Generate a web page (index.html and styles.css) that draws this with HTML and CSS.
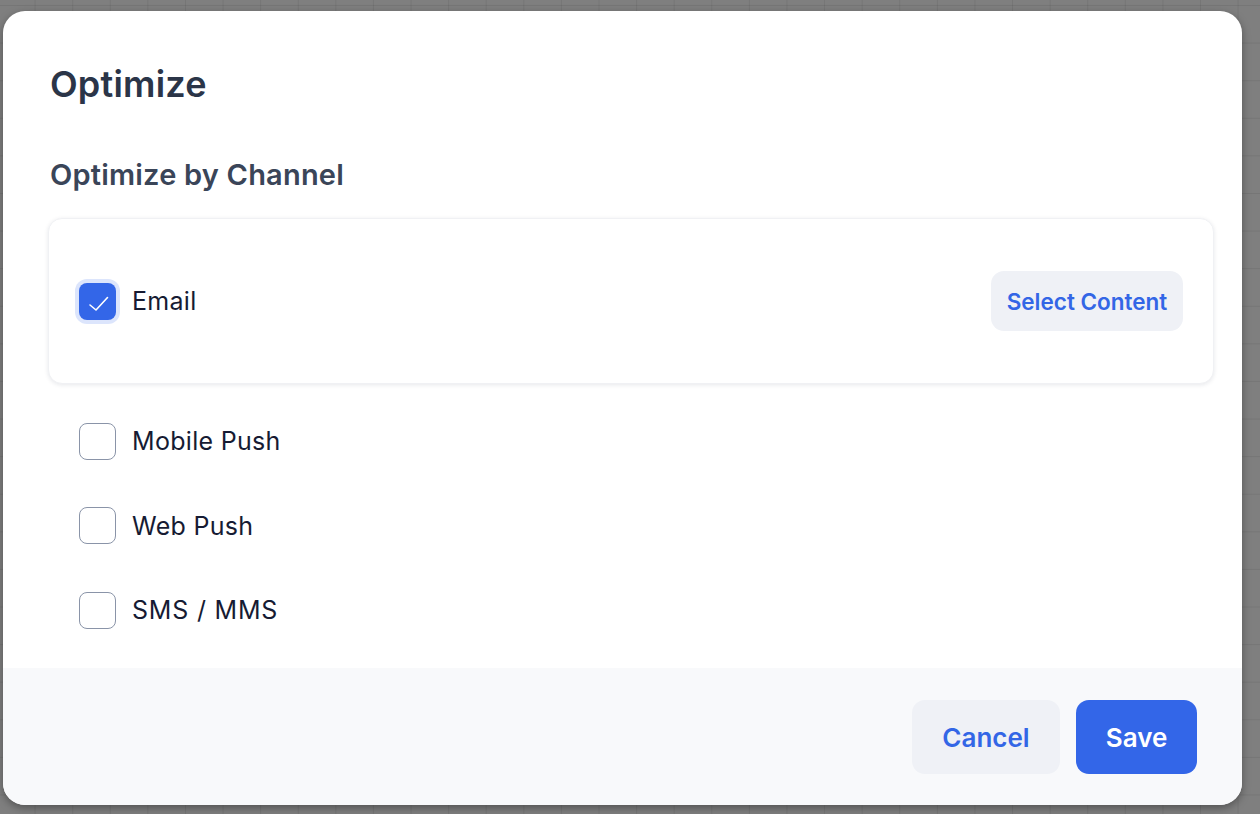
FILE: index.html
```html
<!DOCTYPE html>
<html lang="en">
<head>
<meta charset="utf-8">
<title>Optimize</title>
<link rel="stylesheet" href="styles.css">
</head>
<body>
<div class="modal">
  <div class="content">
    <h1 class="title">Optimize</h1>
    <h2 class="subtitle">Optimize by Channel</h2>
    <div class="card">
      <label class="option">
        <span class="box checked">
          <svg viewBox="0 0 37 37" width="37" height="37"><path d="M11 22 L17 27 L28.5 14.5" fill="none" stroke="#fff" stroke-width="1.6" stroke-linecap="round" stroke-linejoin="round"/></svg>
        </span>
        <span class="label">Email</span>
      </label>
      <button class="btn btn-light select">Select Content</button>
    </div>
    <div class="list">
      <label class="option row"><span class="box"></span><span class="label">Mobile Push</span></label>
      <label class="option row"><span class="box"></span><span class="label">Web Push</span></label>
      <label class="option row"><span class="box"></span><span class="label wide">SMS / MMS</span></label>
    </div>
  </div>
  <div class="footer">
    <button class="btn btn-light cancel">Cancel</button>
    <button class="btn btn-primary save">Save</button>
  </div>
</div>
</body>
</html>
```
FILE: styles.css
```css
html, body {
  margin: 0;
  height: 100%;
}
body {
  background-color: #7f7f7f;
  background-image:
    linear-gradient(to right, rgba(0,0,0,0.07) 1px, transparent 1px),
    linear-gradient(to bottom, rgba(0,0,0,0.07) 1px, transparent 1px);
  background-size: 37.6px 37.6px;
  background-position: -3px 5px;
  padding: 11px 18px 9px 3px;
  box-sizing: border-box;
  font-family: "Inter", "Liberation Sans", sans-serif;
  overflow: hidden;
}
.modal {
  width: 1239px;
  height: 794px;
  background: #fff;
  border-radius: 22px;
  overflow: hidden;
  display: flex;
  flex-direction: column;
  box-shadow: 0 3px 8px rgba(0,0,0,0.35);
}
.content {
  padding: 53px 28px 0 45px;
  flex: 1;
}
.title {
  margin: 0 0 0 2px;
  font-size: 36px;
  line-height: 40px;
  font-weight: 600;
  color: #2b3548;
  letter-spacing: 0.2px;
}
.subtitle {
  margin: 53px 0 0 2px;
  font-size: 29px;
  line-height: 36px;
  font-weight: 600;
  color: #3a4558;
  letter-spacing: 0.2px;
}
.card {
  margin-top: 25px;
  height: 166px;
  box-sizing: border-box;
  padding: 0 30px;
  border-radius: 14px;
  background: #fff;
  border: 1px solid #f0f1f4;
  box-shadow: 0 1px 4px rgba(20,30,60,0.10);
  display: flex;
  align-items: center;
  justify-content: space-between;
}
.option {
  display: flex;
  align-items: center;
  gap: 16px;
}
.box {
  width: 37px;
  height: 37px;
  box-sizing: border-box;
  border: 1.5px solid #8a94a8;
  border-radius: 8px;
  background: #fff;
  flex: none;
  display: block;
}
.box.checked {
  border: none;
  background: #3366e8;
  box-shadow: 0 0 0 4px #dce5fc;
}
.box svg { display: block; }
.label {
  font-size: 25px;
  color: #161b33;
  letter-spacing: 0.3px;
}
.label.wide { letter-spacing: 0.8px; }
.list {
  margin-top: 15px;
  padding-left: 31px;
}
.row {
  height: 84.5px;
}
.btn {
  font-family: inherit;
  font-weight: 600;
  border: none;
  border-radius: 13px;
  cursor: pointer;
}
.btn-light {
  background: #eff1f6;
  color: #3366e6;
}
.btn-primary {
  background: #3366e8;
  color: #fff;
}
.select {
  height: 60px;
  width: 192px;
  padding: 0;
  font-size: 22.5px;
}
.footer {
  background: #f8f9fb;
  height: 137px;
  box-sizing: border-box;
  padding: 32px 45px 31px;
  display: flex;
  justify-content: flex-end;
  gap: 16px;
}
.footer .btn {
  height: 74px;
  font-size: 26px;
}
.cancel { width: 148px; }
.save { width: 121px; }
```
